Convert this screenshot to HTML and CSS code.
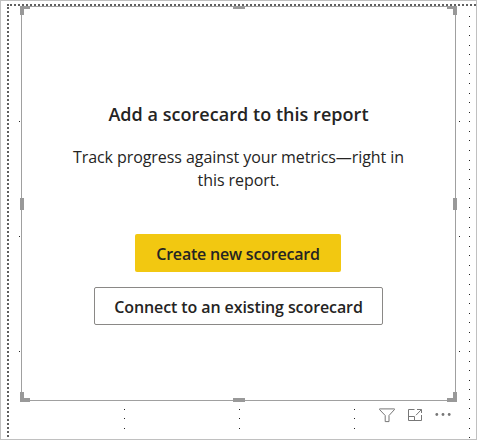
FILE: index.html
```
<!DOCTYPE html>
<html lang="en">
<head>
<meta charset="utf-8">
<title>Add a scorecard</title>
<link rel="stylesheet" href="styles.css">
</head>
<body>
<main class="report">
  <svg class="guides" viewBox="0 0 477 440" aria-hidden="true">
    <g class="page-edge">
      <path d="M10 5H476" stroke-dasharray="2 2"/>
      <path d="M8 7V438" stroke-dasharray="2 2"/>
      <path d="M7 5H9"/>
    </g>
    <g class="grid-dots">
      <path d="M469.5 16V438M124.5 408.9V438M239.5 408.9V438M354.5 408.9V438"/>
      <path d="M19 121.5h1M19 236.5h1M19 351.5h1M459 121.5h1M459 236.5h1M459 351.5h1"/>
    </g>
  </svg>
  <section class="visual">
    <h1 class="title">Add a scorecard to this report</h1>
    <p class="description"><span class="line first">Track progress against your metrics—right in</span> <span class="line">this report.</span></p>
    <button class="button primary"><span>Create new scorecard</span></button>
    <button class="button secondary"><span>Connect to an existing scorecard</span></button>
    <i class="handle top left"></i><i class="handle top middle"></i><i class="handle top right"></i>
    <i class="handle center left"></i><i class="handle center right"></i>
    <i class="handle bottom left"></i><i class="handle bottom middle"></i><i class="handle bottom right"></i>
  </section>
  <div class="toolbar">
    <svg width="17" height="15" viewBox="0 0 17 15"><path d="M.5.9H15.5V1.5L10 7.5V13.6H6.2V7.5L.5 1.5Z"/></svg>
    <svg width="15" height="14" viewBox="0 0 15 14"><path d="M6.5 1.5H.5V12.5H13.5V7M9 1.5H13.5V5M13.3 1.7L8 7.2M.5 8.5H6.5V12.5"/></svg>
    <svg class="more" width="16" height="4" viewBox="0 0 16 4"><circle cx="1.8" cy="1.5" r="1.4"/><circle cx="8" cy="1.5" r="1.4"/><circle cx="14.2" cy="1.5" r="1.4"/></svg>
  </div>
</main>
</body>
</html>
```
FILE: styles.css
```
* { box-sizing: border-box; }
body { margin: 0; background: #fff; }
.report {
  position: relative;
  width: 477px;
  height: 440px;
  padding: 5px 0 0 20px;
  border: 1px solid #c0c0c0;
  overflow: hidden;
  font-family: "Open Sans", "Noto Sans", sans-serif;
  color: #252423;
}
.guides { position: absolute; top: -1px; left: -1px; width: 477px; height: 440px; shape-rendering: crispEdges; }
.page-edge { stroke: #606060; stroke-width: 2; fill: none; }
.grid-dots { stroke: #222; stroke-width: 1; stroke-dasharray: 1 8.57; fill: none; }
.visual {
  position: relative;
  display: flex;
  flex-direction: column;
  align-items: center;
  width: 435px;
  height: 395px;
  padding-top: 95px;
  border: 1px solid #a0a0a0;
  background: #fff;
}
.title { margin: 0; font-size: 18px; line-height: 25px; font-weight: 600; white-space: nowrap; letter-spacing: .04px; }
.description { margin: 19px 0 42px; font-size: 16px; line-height: 23px; font-weight: 400; text-align: center; letter-spacing: -.07px; }
.line { display: block; white-space: nowrap; }
.button { font: 600 16px/24px "Open Sans", "Noto Sans", sans-serif; color: #252423; height: 38px; padding: 2px 0 0; border-radius: 2px; white-space: nowrap; letter-spacing: -.1px; }
.primary { width: 206px; margin-right: 1px; border: 0; background: #f2c811; letter-spacing: -.2px; }
.secondary { width: 289px; margin-top: 15px; border: 1px solid #8a8886; background: #fff; }
.handle { position: absolute; width: 10px; height: 9px; border: 0 solid #999; }
.top { top: -1px; border-top-width: 3px; }
.bottom { bottom: -2px; height: 10px; border-bottom-width: 4px; }
.left { left: -2px; border-left-width: 4px; }
.right { right: -2px; border-right-width: 4px; }
.middle { left: 211px; width: 12px; }
.center { top: 191px; height: 12px; }
.toolbar { position: relative; display: flex; align-items: center; gap: 12px; margin: 6px 0 0 358px; height: 16px; }
.toolbar svg { fill: none; stroke: #777; stroke-width: 1; flex: none; }
.toolbar .more { fill: #777; stroke: none; }
```
